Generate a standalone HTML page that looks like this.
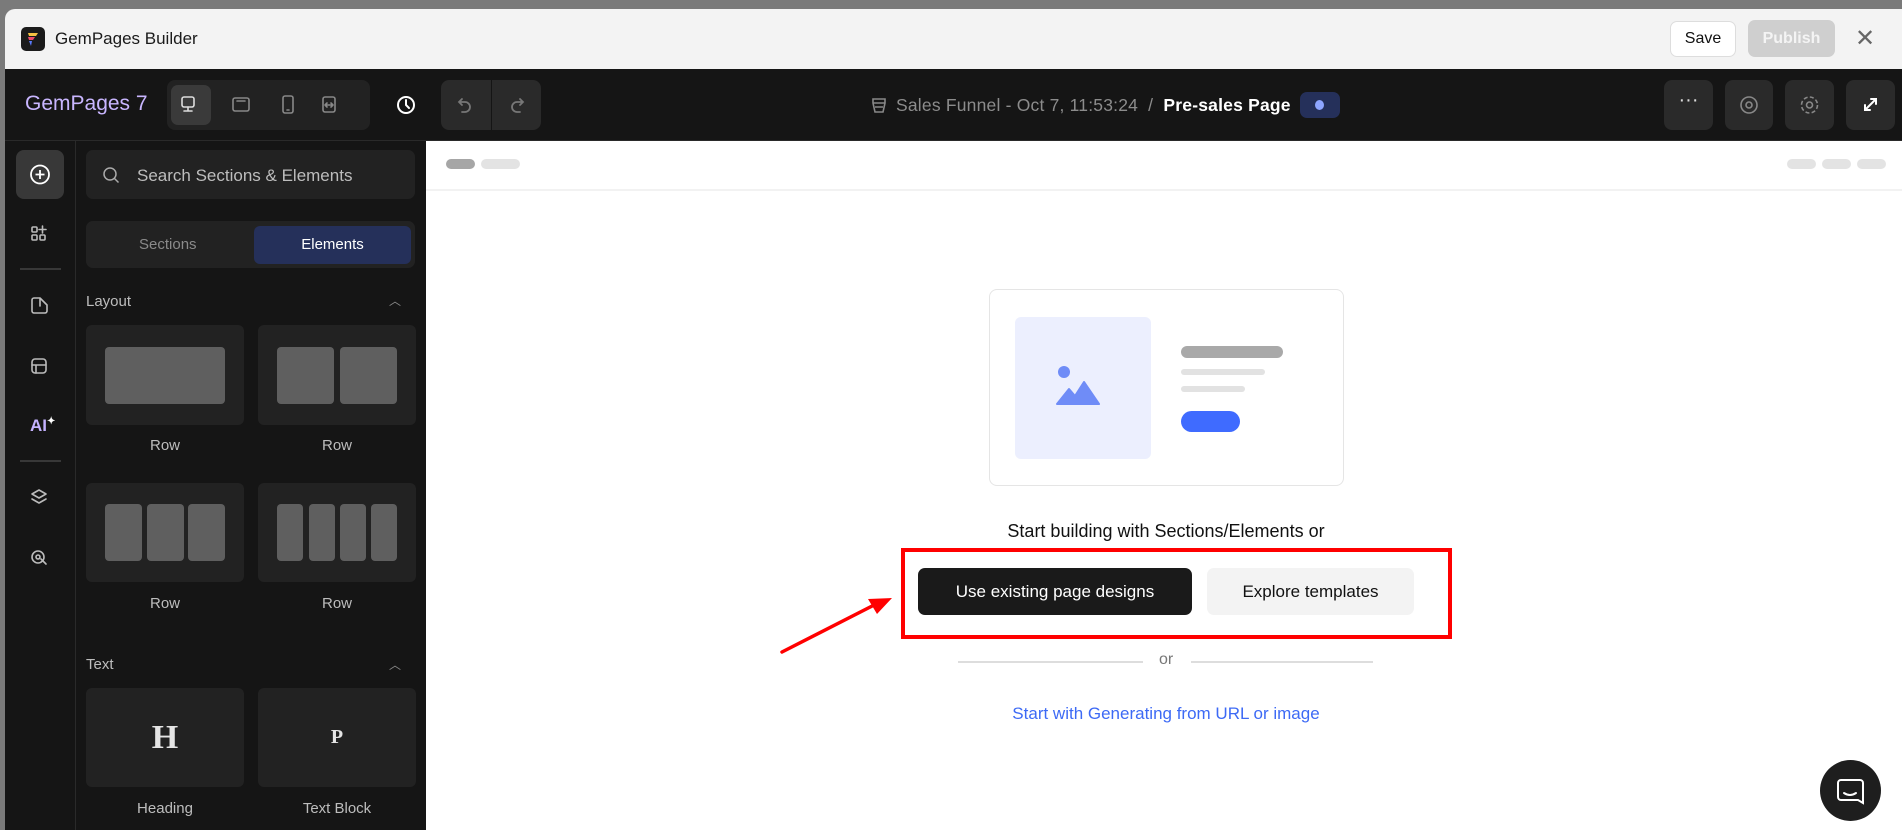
<!DOCTYPE html>
<html><head><meta charset="utf-8"><style>
*{box-sizing:border-box;margin:0;padding:0}
body{width:1902px;height:830px;overflow:hidden;background:#7a7a7a;font-family:"Liberation Sans",sans-serif;position:relative}
.a{position:absolute}
.win{left:5px;top:9px;width:1897px;height:821px;background:#f3f3f3;border-radius:10px 0 0 0;overflow:hidden}
.ic{stroke:#bbb;fill:none;stroke-width:1.6;stroke-linecap:round;stroke-linejoin:round}
.card{background:#222;border-radius:6px}
.blk{background:#5f5f5f;border-radius:4px;position:absolute}
.lbl{color:#bdbdbd;font-size:15px;text-align:center;width:158px}
.tb{background:#2a2a2a;border-radius:8px}
</style></head><body>
<div class="a win"></div>
<!-- title bar -->
<div class="a" style="left:21px;top:27px;width:24px;height:24px;background:#1b1b1b;border-radius:5px">
<svg width="24" height="24" viewBox="0 0 24 24"><path d="M7 6h10l-2 3H8z" fill="#f6c343"/><path d="M7 10h7l-2 3H8z" fill="#ef4b6b"/><path d="M8 14h3l-1 5z" fill="#5a7bff"/></svg></div>
<div class="a" style="left:55px;top:29px;font-size:17px;color:#1a1a1a">GemPages Builder</div>
<div class="a" style="left:1670px;top:21px;width:66px;height:36px;background:#fff;border:1px solid #ddd;border-radius:7px;font-size:16px;line-height:34px;text-align:center;color:#111">Save</div>
<div class="a" style="left:1748px;top:20px;width:87px;height:37px;background:#cfcfcf;border-radius:7px;font-size:16px;font-weight:bold;line-height:37px;text-align:center;color:#f4f4f4">Publish</div>
<div class="a" style="left:1855px;top:24px;font-size:24px;color:#666;font-weight:300">✕</div>
<!-- toolbar -->
<div class="a" style="left:5px;top:69px;width:1897px;height:72px;background:#151515;border-bottom:1px solid #2a2a2a"></div>
<div class="a" style="left:25px;top:92px;font-size:21px;color:#c9b6ff">GemPages 7</div>
<div class="a tb" style="left:167px;top:80px;width:203px;height:50px;background:#222"></div>
<div class="a" style="left:171px;top:85px;width:40px;height:40px;background:#3a3a3a;border-radius:7px"></div>
<svg class="a" style="left:167px;top:80px" width="203" height="50"><g class="ic" style="stroke:#ddd"><rect x="15" y="17" width="12" height="10" rx="2"/><path d="M17 31h8M21 27v4"/></g><g class="ic" style="stroke:#888"><rect x="66" y="18" width="16" height="13" rx="2"/><path d="M70 21h8"/><rect x="116" y="16" width="10" height="17" rx="2"/><path d="M120 30h2"/><path d="M158 17h8a2 2 0 012 2v11a2 2 0 01-2 2h-8a2 2 0 01-2-2V19a2 2 0 012-2zM158 25h8M160 23l-2 2 2 2M164 23l2 2-2 2"/></g></svg>
<svg class="a" style="left:394px;top:93px" width="24" height="24"><circle cx="12" cy="12" r="8" fill="none" stroke="#fff" stroke-width="2"/><path d="M12 7v5l3 3" fill="none" stroke="#fff" stroke-width="2" stroke-linecap="round"/></svg>
<div class="a tb" style="left:441px;top:80px;width:100px;height:50px"></div>
<div class="a" style="left:491px;top:80px;width:1px;height:50px;background:#151515"></div>
<svg class="a" style="left:441px;top:80px" width="100" height="50"><g fill="none" stroke="#777" stroke-width="1.8" stroke-linecap="round"><path d="M21 19l-3 3 3 3M18 22h6a5 5 0 010 10h-3"/><path d="M79 19l3 3-3 3M82 22h-6a5 5 0 000 10h3"/></g></svg>
<svg class="a" style="left:869px;top:95px" width="20" height="20"><path d="M4 4h12v4l-2 9h-8l-2-9zM4 8h12M6 12h8" fill="none" stroke="#888" stroke-width="1.6"/></svg>
<div class="a" style="left:896px;top:95px;font-size:17.5px;color:#8c8c8c;white-space:nowrap;letter-spacing:0.2px">Sales Funnel - Oct 7, 11:53:24 &nbsp;/&nbsp; <span style="color:#fff;font-weight:bold">Pre-sales Page</span></div>
<div class="a" style="left:1300px;top:92px;width:40px;height:26px;background:#25305a;border-radius:7px"><div class="a" style="left:15px;top:8px;width:9px;height:10px;border-radius:50%;background:#8ea5ff"></div></div>
<div class="a tb" style="left:1664px;top:80px;width:49px;height:50px;color:#ddd;font-size:20px;text-align:center;line-height:40px">···</div>
<div class="a tb" style="left:1725px;top:80px;width:48px;height:50px"><svg width="48" height="50"><circle cx="24" cy="25" r="8" fill="none" stroke="#888" stroke-width="1.6"/><circle cx="24" cy="25" r="3" fill="none" stroke="#888" stroke-width="1.6"/></svg></div>
<div class="a tb" style="left:1785px;top:80px;width:49px;height:50px"><svg width="49" height="50"><circle cx="24.5" cy="25" r="3" fill="none" stroke="#888" stroke-width="1.6"/><circle cx="24.5" cy="25" r="8" fill="none" stroke="#888" stroke-width="1.6" stroke-dasharray="4 2.3"/></svg></div>
<div class="a tb" style="left:1846px;top:80px;width:49px;height:50px"><svg width="49" height="50"><path d="M19 30l11-11M25 19h5v5M19 25v5h5" fill="none" stroke="#fff" stroke-width="2" stroke-linecap="round"/></svg></div>
<!-- left column -->
<div class="a" style="left:5px;top:141px;width:71px;height:689px;background:#151515;border-right:1px solid #2a2a2a"></div>
<div class="a" style="left:16px;top:150px;width:48px;height:49px;background:#383838;border-radius:8px"><svg width="48" height="49"><circle cx="24" cy="24.5" r="9" fill="none" stroke="#fff" stroke-width="1.8"/><path d="M24 20v9M19.5 24.5h9" stroke="#fff" stroke-width="1.8"/></svg></div>
<svg class="a" style="left:5px;top:141px" width="71" height="689"><g class="ic"><rect x="27" y="86" width="5" height="5" rx="1"/><rect x="27" y="94" width="5" height="5" rx="1"/><rect x="35" y="94" width="5" height="5" rx="1"/><path d="M37.5 85v7M34 88.5h7"/><path d="M29 157h6l7 7v6a2 2 0 01-2 2H29a2 2 0 01-2-2v-11a2 2 0 012-2zM35 157v8"/><rect x="27" y="218" width="14" height="14" rx="3"/><path d="M27 224h14M31 224v8"/><path d="M34 349l-7 4 7 4 7-4zM27 358l7 4 7-4"/><circle cx="33" cy="416" r="6"/><circle cx="33" cy="416" r="2"/><path d="M36 418l5 5"/></g><path d="M15 128h41M15 320h41" stroke="#444" stroke-width="1.5"/></svg>
<div class="a" style="left:30px;top:416px;font-size:17px;font-weight:bold;color:#c4b2ff">AI<span style="font-size:10px;vertical-align:top;color:#fff">✦</span></div>
<!-- panel -->
<div class="a" style="left:76px;top:141px;width:350px;height:689px;background:#151515"></div>
<div class="a" style="left:86px;top:150px;width:329px;height:49px;background:#222;border-radius:7px"></div>
<svg class="a" style="left:102px;top:166px" width="18" height="18"><circle cx="8" cy="8" r="6" fill="none" stroke="#aaa" stroke-width="1.5"/><path d="M12.5 12.5l4 4" stroke="#aaa" stroke-width="1.5"/></svg>
<div class="a" style="left:137px;top:166px;font-size:17px;color:#bdbdbd">Search Sections &amp; Elements</div>
<div class="a" style="left:86px;top:221px;width:329px;height:47px;background:#222;border-radius:7px"></div>
<div class="a" style="left:139px;top:236px;font-size:15px;color:#8a8a8a">Sections</div>
<div class="a" style="left:254px;top:226px;width:157px;height:38px;background:#25305a;border-radius:6px;color:#fff;font-size:15px;text-align:center;line-height:38px">Elements</div>
<div class="a" style="left:86px;top:293px;font-size:15px;color:#bdbdbd">Layout</div>
<div class="a" style="left:389px;top:292px;color:#888;font-size:12px">︿</div>
<div class="a card" style="left:86px;top:325px;width:158px;height:100px"><div class="blk" style="left:19px;top:22px;width:120px;height:57px"></div></div>
<div class="a card" style="left:258px;top:325px;width:158px;height:100px"><div class="blk" style="left:19px;top:22px;width:57px;height:57px"></div><div class="blk" style="left:82px;top:22px;width:57px;height:57px"></div></div>
<div class="a lbl" style="left:86px;top:437px">Row</div><div class="a lbl" style="left:258px;top:437px">Row</div>
<div class="a card" style="left:86px;top:483px;width:158px;height:99px"><div class="blk" style="left:19px;top:21px;width:37px;height:57px"></div><div class="blk" style="left:61px;top:21px;width:37px;height:57px"></div><div class="blk" style="left:102px;top:21px;width:37px;height:57px"></div></div>
<div class="a card" style="left:258px;top:483px;width:158px;height:99px"><div class="blk" style="left:19px;top:21px;width:26px;height:57px"></div><div class="blk" style="left:51px;top:21px;width:26px;height:57px"></div><div class="blk" style="left:82px;top:21px;width:26px;height:57px"></div><div class="blk" style="left:113px;top:21px;width:26px;height:57px"></div></div>
<div class="a lbl" style="left:86px;top:595px">Row</div><div class="a lbl" style="left:258px;top:595px">Row</div>
<div class="a" style="left:86px;top:656px;font-size:15px;color:#bdbdbd">Text</div>
<div class="a" style="left:389px;top:656px;color:#888;font-size:12px">︿</div>
<div class="a card" style="left:86px;top:688px;width:158px;height:99px;text-align:center;font-family:'Liberation Serif',serif;font-weight:bold;color:#e5e5e5;font-size:34px;line-height:99px">H</div>
<div class="a card" style="left:258px;top:688px;width:158px;height:99px;text-align:center;font-family:'Liberation Serif',serif;font-weight:bold;color:#e5e5e5;font-size:20px;line-height:99px">P</div>
<div class="a lbl" style="left:86px;top:800px">Heading</div><div class="a lbl" style="left:258px;top:800px">Text Block</div>
<!-- canvas -->
<div class="a" style="left:426px;top:141px;width:1476px;height:689px;background:#fff"></div>
<div class="a" style="left:426px;top:189px;width:1476px;height:2px;background:#f2f2f2"></div>
<div class="a" style="left:446px;top:159px;width:29px;height:10px;border-radius:5px;background:#a6a6a6"></div>
<div class="a" style="left:481px;top:159px;width:39px;height:10px;border-radius:5px;background:#e3e3e3"></div>
<div class="a" style="left:1787px;top:159px;width:29px;height:10px;border-radius:5px;background:#e3e3e3"></div>
<div class="a" style="left:1822px;top:159px;width:29px;height:10px;border-radius:5px;background:#e3e3e3"></div>
<div class="a" style="left:1857px;top:159px;width:29px;height:10px;border-radius:5px;background:#e3e3e3"></div>
<div class="a" style="left:989px;top:289px;width:355px;height:197px;border:1.5px solid #e5e5e5;border-radius:8px"></div>
<div class="a" style="left:1015px;top:317px;width:136px;height:142px;background:#eceffe;border-radius:6px"><svg width="136" height="142"><circle cx="49" cy="55" r="6" fill="#6f8cf7"/><path d="M42 87l12-15 6 7 9-14 15 22z" fill="#6f8cf7" stroke="#6f8cf7" stroke-width="2" stroke-linejoin="round"/></svg></div>
<div class="a" style="left:1181px;top:346px;width:102px;height:12px;border-radius:6px;background:#a9a9a9"></div>
<div class="a" style="left:1181px;top:369px;width:84px;height:6px;border-radius:3px;background:#e2e2e2"></div>
<div class="a" style="left:1181px;top:386px;width:64px;height:6px;border-radius:3px;background:#e2e2e2"></div>
<div class="a" style="left:1181px;top:411px;width:59px;height:21px;border-radius:11px;background:#3f6bff"></div>
<div class="a" style="left:900px;top:521px;width:532px;text-align:center;font-size:18px;color:#111">Start building with Sections/Elements or</div>
<div class="a" style="left:901px;top:548px;width:551px;height:91px;border:4px solid #f00"></div>
<div class="a" style="left:918px;top:568px;width:274px;height:47px;background:#1a1a1a;border-radius:7px;color:#fff;font-size:17px;text-align:center;line-height:47px">Use existing page designs</div>
<div class="a" style="left:1207px;top:568px;width:207px;height:47px;background:#f3f3f3;border-radius:7px;color:#111;font-size:17px;text-align:center;line-height:47px">Explore templates</div>
<svg class="a" style="left:770px;top:590px" width="130" height="70"><path d="M12 62L110 12" stroke="#f00" stroke-width="3.5" stroke-linecap="round"/><path d="M122 8l-24 1 9 15z" fill="#f00"/></svg>
<div class="a" style="left:958px;top:661px;width:185px;height:1.5px;background:#ddd"></div>
<div class="a" style="left:1191px;top:661px;width:182px;height:1.5px;background:#ddd"></div>
<div class="a" style="left:1159px;top:651px;font-size:16px;color:#777">or</div>
<div class="a" style="left:900px;top:704px;width:532px;text-align:center;font-size:17px;color:#3d6af5">Start with Generating from URL or image</div>
<div class="a" style="left:1820px;top:760px;width:61px;height:61px;border-radius:50%;background:#1e1e1e"><svg width="61" height="61"><path d="M21 20h19a3 3 0 013 3v20l-5-3H21a3 3 0 01-3-3V23a3 3 0 013-3z" fill="none" stroke="#fff" stroke-width="2"/><path d="M24 33q6 4 12 0" fill="none" stroke="#fff" stroke-width="2" stroke-linecap="round"/></svg></div>
</body></html>
